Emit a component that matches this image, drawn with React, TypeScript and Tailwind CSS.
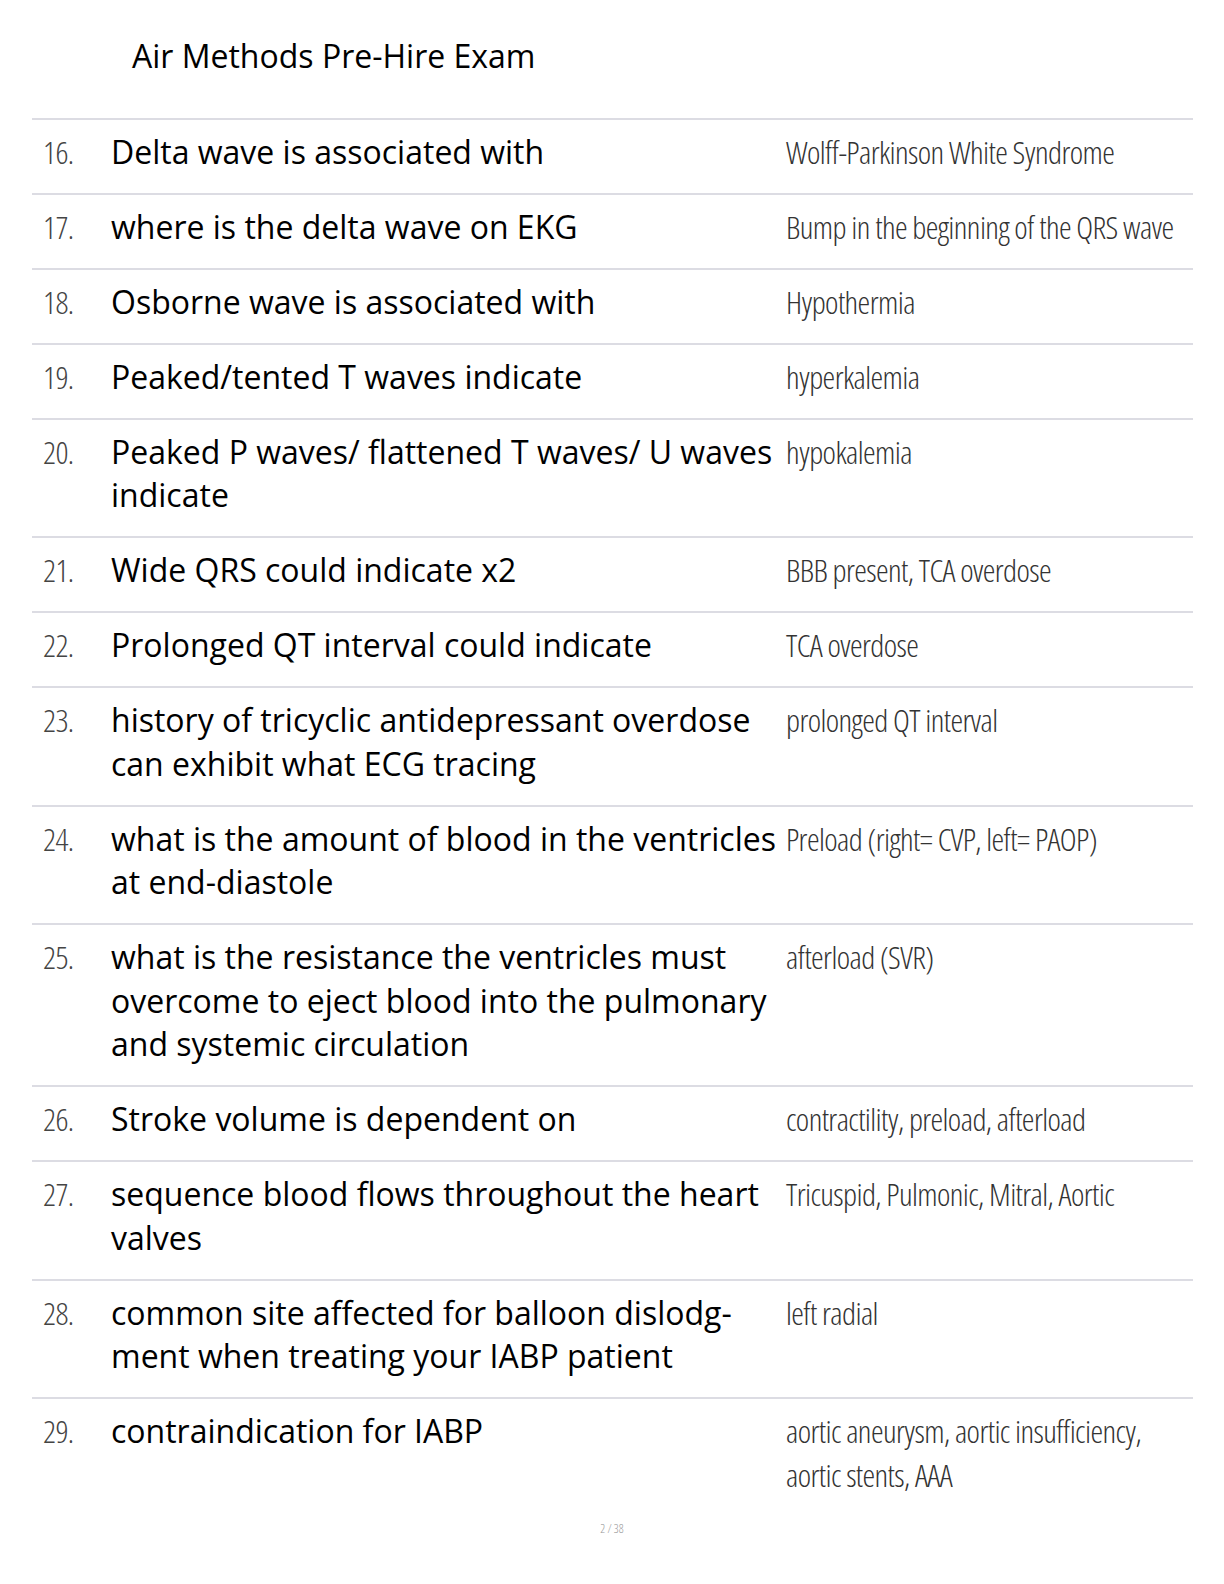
import React from "react";

type Row = { n: string; q: string[]; a: string[] };

const rows: Row[] = [
  { n: "16.", q: ["Delta wave is associated with"], a: ["Wolff-Parkinson White Syndrome"] },
  { n: "17.", q: ["where is the delta wave on EKG"], a: ["Bump in the beginning of the QRS wave"] },
  { n: "18.", q: ["Osborne wave is associated with"], a: ["Hypothermia"] },
  { n: "19.", q: ["Peaked/tented T waves indicate"], a: ["hyperkalemia"] },
  { n: "20.", q: ["Peaked P waves/ flattened T waves/ U waves", "indicate"], a: ["hypokalemia"] },
  { n: "21.", q: ["Wide QRS could indicate x2"], a: ["BBB present, TCA overdose"] },
  { n: "22.", q: ["Prolonged QT interval could indicate"], a: ["TCA overdose"] },
  { n: "23.", q: ["history of tricyclic antidepressant overdose", "can exhibit what ECG tracing"], a: ["prolonged QT interval"] },
  { n: "24.", q: ["what is the amount of blood in the ventricles", "at end-diastole"], a: ["Preload (right= CVP, left= PAOP)"] },
  {
    n: "25.",
    q: ["what is the resistance the ventricles must", "overcome to eject blood into the pulmonary", "and systemic circulation"],
    a: ["afterload (SVR)"],
  },
  { n: "26.", q: ["Stroke volume is dependent on"], a: ["contractility, preload, afterload"] },
  { n: "27.", q: ["sequence blood flows throughout the heart", "valves"], a: ["Tricuspid, Pulmonic, Mitral, Aortic"] },
  { n: "28.", q: ["common site affected for balloon dislodg-", "ment when treating your IABP patient"], a: ["left radial"] },
  { n: "29.", q: ["contraindication for IABP"], a: ["aortic aneurysm, aortic insufficiency,", "aortic stents, AAA"] },
];

function Lines({ lines }: { lines: string[] }) {
  return (
    <>
      {lines.map((l, i) => (
        <React.Fragment key={i}>
          {i > 0 && <br />}
          {l}
        </React.Fragment>
      ))}
    </>
  );
}

export default function App() {
  return (
    <div className="w-[1224px] min-h-[1584px] bg-white font-['Open_Sans',sans-serif] text-black">
      <div className="pt-[34px] pl-[132px] text-[32px] leading-[43.5px]">Air Methods Pre-Hire Exam</div>
      <div className="mt-[40px] ml-[32px] w-[1161px]">
        {rows.map((r) => (
          <div
            key={r.n}
            className="grid grid-cols-[79px_675px_1fr] items-baseline border-t-2 border-[#dcdce3] pt-[10px] pb-[19.5px]"
          >
            <div className="pl-[11px] text-[32px] leading-[43.5px] font-light font-stretch-[75%] tracking-[-0.6px] text-[#444]">
              {r.n}
            </div>
            <div className="text-[32px] leading-[43.5px] whitespace-nowrap">
              <Lines lines={r.q} />
            </div>
            <div className="text-[32px] leading-[43.5px] font-light font-stretch-[75%] tracking-[-0.6px] whitespace-nowrap text-[#333]">
              <Lines lines={r.a} />
            </div>
          </div>
        ))}
      </div>
      <div className="mt-[5px] text-center text-[12px] leading-[16px] font-light font-stretch-[75%] text-[#999]">2 / 38</div>
    </div>
  );
}
